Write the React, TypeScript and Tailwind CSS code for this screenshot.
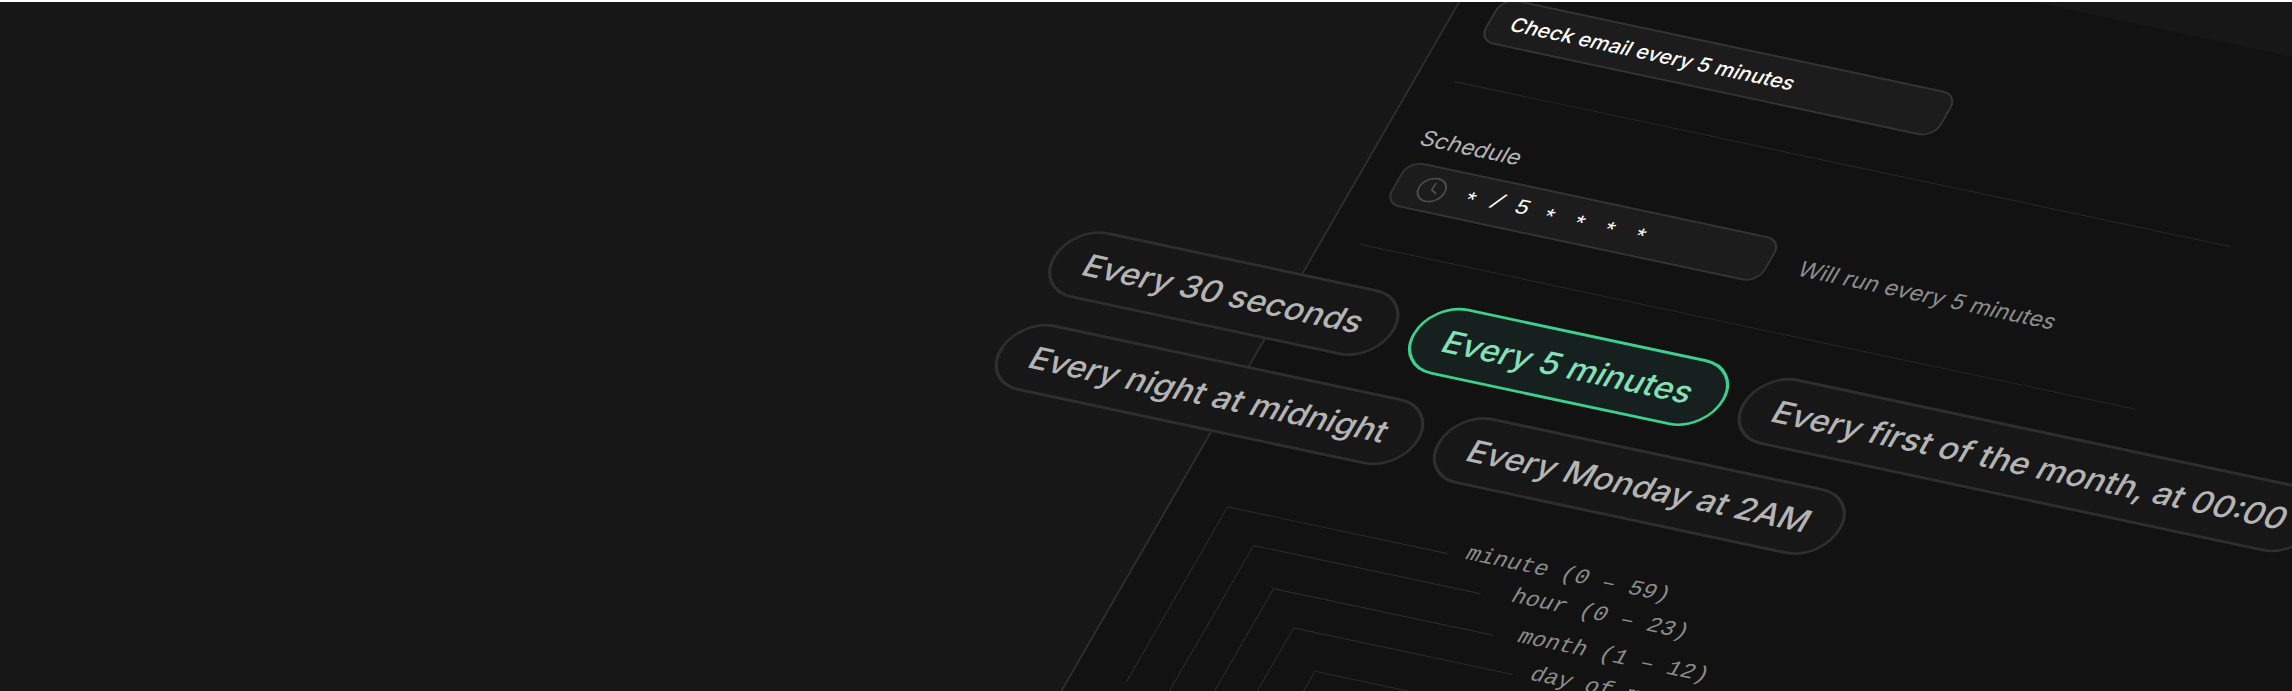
import React from "react";

type Preset = { label: string; active?: boolean };

const presetRows: Preset[][] = [
  [
    { label: "Every 30 seconds" },
    { label: "Every 5 minutes", active: true },
    { label: "Every first of the month, at 00:00" },
  ],
  [{ label: "Every night at midnight" }, { label: "Every Monday at 2AM" }],
];

const fields = [
  { label: "minute (0 – 59)", line: "w-[224px] mr-[18px]", next: "pt-[33px] pl-[43px]" },
  { label: "hour (0 – 23)", line: "w-[232px] mr-[30px]", next: "pt-[39px] pl-[40px]" },
  { label: "month (1 – 12)", line: "w-[224px] mr-[24px]", next: "pt-[35px] pl-[38px]" },
  { label: "day of month (1 – 31)", line: "w-[224px] mr-[16px]", next: "pt-[39px] pl-[41px]" },
  { label: "day of week (0 – 6)", line: "w-[224px] mr-[16px]", next: "" },
];

const cronCells = [
  { name: "minute", value: "*" },
  { name: "minute separator", value: "/" },
  { name: "minute step", value: "5" },
  { name: "hour", value: "*" },
  { name: "month", value: "*" },
  { name: "day of month", value: "*" },
  { name: "day of week", value: "*" },
];

function PresetPill({ label, active }: Preset) {
  const tone = active
    ? "border-[#3ecf8e] bg-[#15201f] text-[#85e0b7]"
    : "border-[#2e2e2e] bg-[#171717] text-[#b4b4b4]";
  return (
    <button
      type="button"
      aria-pressed={!!active}
      className={`h-[76px] shrink-0 rounded-full border-3 px-[30px] text-[33px] leading-[40px] font-medium whitespace-nowrap ${tone}`}
    >
      {label}
    </button>
  );
}

function FieldBranch({ index }: { index: number }) {
  const field = fields[index];
  return (
    <div className="flex-1 border-l border-[#2e2e2e]">
      <div className="flex h-px items-center">
        <span className={`h-px shrink-0 bg-[#2e2e2e] ${field.line}`} />
        <span className="-mt-[10px] font-['Liberation_Mono',monospace] text-[23px] leading-[28px] whitespace-nowrap text-[#8c8c8c]">
          {field.label}
        </span>
      </div>
      {index + 1 < fields.length ? (
        <div className={`flex ${field.next}`}>
          <FieldBranch index={index + 1} />
        </div>
      ) : (
        <div className="h-[52px]" />
      )}
    </div>
  );
}

function ClockIcon() {
  return (
    <svg viewBox="0 0 28 28" className="size-[28px] shrink-0" fill="none" stroke="#4d4d4d" strokeWidth="1.8" aria-hidden="true">
      <circle cx="14" cy="14" r="13" />
      <path d="M14 6v8l6 3" />
    </svg>
  );
}

export default function App() {
  return (
    <main className="relative min-h-screen overflow-hidden border-t-2 border-white bg-[#171717] font-['Inter',sans-serif]">
      <div className="absolute -top-[109px] left-1/2 ml-[375px] w-[1400px] origin-top-left [transform:matrix(0.978,0.208,-0.5,0.866,0,0)] border-l-2 border-[#2e2e2e] bg-[#121212] pb-[300px]">
        <div className="w-[830px] pt-[111px] pl-[36px]">
          <input
            type="text"
            aria-label="Name"
            defaultValue="Check email every 5 minutes"
            className="block h-[51px] w-[467px] rounded-[16px] border-2 border-[#343434] bg-[#1c1c1c] px-[20px] text-[21px] font-medium text-white outline-none"
          />
          <hr className="mt-[46px] border-[#2a2a2a]" />
          <div className="pt-[50px]">
            <label htmlFor="cron-0" className="block pb-[12px] text-[23px] leading-[28px] text-[#b4b4b4]">
              Schedule
            </label>
            <div className="flex items-center gap-[30px]">
              <div className="flex h-[51px] w-[383px] shrink-0 items-center rounded-[16px] border-2 border-[#343434] bg-[#1c1c1c] pl-[21px] font-['Liberation_Mono',monospace] text-[23px] text-white">
                <ClockIcon />
                <div className="ml-[13px] flex items-center">
                  {cronCells.map(({ name, value }, index) => (
                    <input
                      key={name}
                      id={`cron-${index}`}
                      type="text"
                      maxLength={1}
                      aria-label={name}
                      defaultValue={value}
                      className={`bg-transparent text-center outline-none ${index < 3 ? "w-[26px]" : "w-[31px]"} ${value === "*" ? "pt-[10px]" : ""}`}
                    />
                  ))}
                </div>
              </div>
              <p className="text-[23px] leading-[28px] whitespace-nowrap text-[#8c8c8c]">Will run every 5 minutes</p>
            </div>
          </div>
          <hr className="mt-[46px] border-[#2a2a2a]" />
        </div>
        <div className="-ml-[237px] flex flex-col gap-[31px] pt-[42px]">
          {presetRows.map((row) => (
            <div key={row[0].label} className="flex gap-[18px]">
              {row.map((preset) => (
                <PresetPill key={preset.label} {...preset} />
              ))}
            </div>
          ))}
        </div>
        <div className="flex pt-[73px] pl-[53px]">
          <FieldBranch index={0} />
        </div>
      </div>
    </main>
  );
}
